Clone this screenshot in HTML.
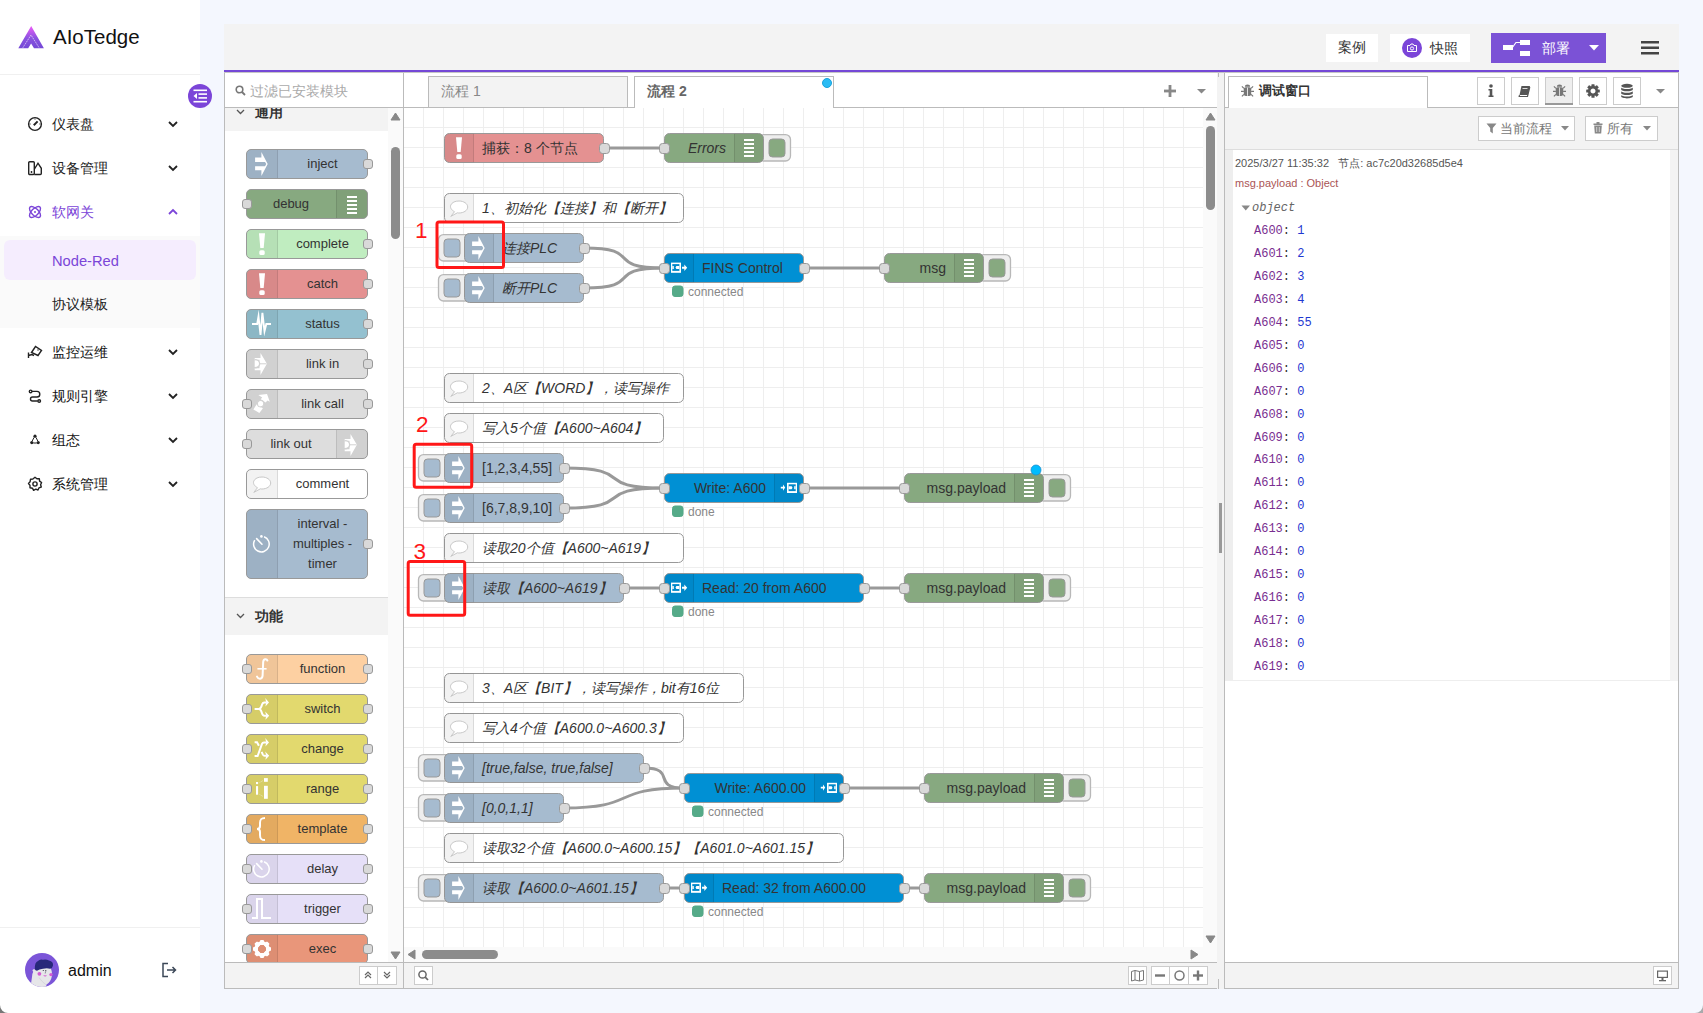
<!DOCTYPE html><html><head><meta charset="utf-8"><style>
*{box-sizing:border-box}
body{margin:0;width:1703px;height:1013px;position:relative;overflow:hidden;background:#f4f7fe;font-family:'Liberation Sans', sans-serif;color:#333}
.a{position:absolute}
.pn{position:absolute;left:246px;width:122px;height:30px;border:1px solid #999;border-radius:5px;font-size:13px;color:#333}
.pi{position:absolute;top:0;bottom:0;width:31px;background:rgba(0,0,0,0.05)}
.pil{left:0;border-right:1px solid rgba(0,0,0,0.1);border-radius:4px 0 0 4px}
.pir{right:0;border-left:1px solid rgba(0,0,0,0.1);border-radius:0 4px 4px 0}
.pl{position:absolute;top:0;line-height:28px;text-align:center;white-space:nowrap}
.pp{position:absolute;width:10px;height:10px;top:9px;background:#d9d9d9;border:1px solid #999;border-radius:3px}
.mi{position:absolute;left:0;width:200px;height:44px;font-size:14px;color:#111}
.mi span{position:absolute;left:52px;top:0;line-height:44px}
.dbg{position:absolute;left:1254px;font-family:'Liberation Mono',monospace;font-size:12px;line-height:16px;white-space:pre}
.dk{color:#792e90} .dv{color:#1f38d1}
</style></head><body>

<div class="a" style="left:0;top:0;width:200px;height:1013px;background:#fff"></div>
<svg class="a" style="left:18px;top:26px" width="27" height="23" viewBox="0 0 27 23">
<defs><linearGradient id="lg" x1="0" y1="0" x2="0" y2="1"><stop offset="0" stop-color="#ee5cf8"/><stop offset="0.55" stop-color="#8a52e0"/><stop offset="1" stop-color="#7448d6"/></linearGradient></defs>
<path d="M13.2 0 L25.9 22.2 H16 L13.1 17.6 L10.2 22.2 H0.3 Z" fill="url(#lg)"/>
<path d="M4.8 21.8 L13 9 L21.2 21.8" fill="none" stroke="#fff" stroke-opacity="0.65" stroke-width="0.9" stroke-dasharray="1.6 0.7"/>
</svg>
<div class="a" style="left:53px;top:23px;font-size:20.5px;line-height:28px;color:#111">AIoTedge</div>
<div class="a" style="left:0;top:74px;width:200px;height:1px;background:#f0f0f0"></div>
<div class="mi" style="top:102px"><span style="color:#222">仪表盘</span></div>
<svg class="a" style="left:27px;top:116px" width="16" height="16" viewBox="0 0 16 16" fill="none" stroke="#222" stroke-width="1.4"><circle cx="8" cy="8" r="6.4"/><path d="M6.8 9.2 L10.6 5.4" stroke-width="2"/><path d="M2.6 8 H3.6 M12.4 8 H13.4 M8 2.6 V3.6" stroke-width="1"/></svg>
<svg class="a" style="left:168px;top:120px" width="10" height="8" viewBox="0 0 10 8"><path d="M1 2 L5 6 L9 2" fill="none" stroke="#222" stroke-width="1.8"/></svg>
<div class="mi" style="top:146px"><span style="color:#222">设备管理</span></div>
<svg class="a" style="left:27px;top:160px" width="16" height="16" viewBox="0 0 16 16" fill="none" stroke="#222" stroke-width="1.4"><rect x="1.7" y="1.7" width="5.6" height="12.8" rx="1"/><path d="M7.3 14.5 H13.3 Q14.3 14.5 14.3 13.5 V8.3 L11 3.2 L7.5 9"/><path d="M4.5 11 V13 M3.5 12 H5.5" stroke-width="0.9"/></svg>
<svg class="a" style="left:168px;top:164px" width="10" height="8" viewBox="0 0 10 8"><path d="M1 2 L5 6 L9 2" fill="none" stroke="#222" stroke-width="1.8"/></svg>
<div class="mi" style="top:190px"><span style="color:#7b45d8">软网关</span></div>
<svg class="a" style="left:27px;top:204px" width="16" height="16" viewBox="0 0 16 16" fill="none" stroke="#7b45d8" stroke-width="1.4"><ellipse cx="8" cy="8" rx="7" ry="3.4" transform="rotate(45 8 8)"/><ellipse cx="8" cy="8" rx="7" ry="3.4" transform="rotate(-45 8 8)"/><circle cx="8" cy="8" r="1" fill="#7b45d8" stroke="none"/></svg>
<svg class="a" style="left:168px;top:208px" width="10" height="8" viewBox="0 0 10 8"><path d="M1 6 L5 2 L9 6" fill="none" stroke="#7b45d8" stroke-width="1.8"/></svg>
<div class="a" style="left:0;top:236px;width:200px;height:92px;background:#fafafa"></div>
<div class="a" style="left:4px;top:240px;width:192px;height:40px;background:#f5edfe;border-radius:6px"></div>
<div class="a" style="left:52px;top:241px;line-height:40px;font-size:14.7px;color:#7b45d8">Node-Red</div>
<div class="a" style="left:52px;top:284px;line-height:40px;font-size:14px;color:#222">协议模板</div>
<div class="mi" style="top:330px"><span>监控运维</span></div>
<svg class="a" style="left:27px;top:344px" width="16" height="16" viewBox="0 0 16 16" fill="none" stroke="#222" stroke-width="1.4"><path d="M4.5 8.5 L8.5 2.5 L14.5 6.5 L11 11.5 Z"/><path d="M1.5 8.5 V14 M1.5 11.5 L5 10.5 L7 11.5" /><circle cx="11" cy="6" r="0.7" fill="#222" stroke="none"/></svg>
<svg class="a" style="left:168px;top:348px" width="10" height="8" viewBox="0 0 10 8"><path d="M1 2 L5 6 L9 2" fill="none" stroke="#222" stroke-width="1.8"/></svg>
<div class="mi" style="top:374px"><span>规则引擎</span></div>
<svg class="a" style="left:27px;top:388px" width="16" height="16" viewBox="0 0 16 16" fill="none" stroke="#222" stroke-width="1.4"><circle cx="3.6" cy="3.4" r="1.3"/><circle cx="12.2" cy="13" r="1.3"/><path d="M5 3.4 H10 A2.8 2.8 0 0 1 10 9 H5.5 A2 2 0 0 0 5.5 13 H10.8"/></svg>
<svg class="a" style="left:168px;top:392px" width="10" height="8" viewBox="0 0 10 8"><path d="M1 2 L5 6 L9 2" fill="none" stroke="#222" stroke-width="1.8"/></svg>
<div class="mi" style="top:418px"><span>组态</span></div>
<svg class="a" style="left:27px;top:432px" width="16" height="16" viewBox="0 0 16 16" fill="none" stroke="#222" stroke-width="1.4"><circle cx="8" cy="4.2" r="1.6" fill="#222" stroke="none"/><circle cx="4.8" cy="10.6" r="1.6" fill="#222" stroke="none"/><circle cx="11.2" cy="10.6" r="1.6" fill="#222" stroke="none"/><path d="M7 5.5 L5.2 9 M9 5.5 L10.8 9 M6.3 11 H9.7" stroke-width="1"/></svg>
<svg class="a" style="left:168px;top:436px" width="10" height="8" viewBox="0 0 10 8"><path d="M1 2 L5 6 L9 2" fill="none" stroke="#222" stroke-width="1.8"/></svg>
<div class="mi" style="top:462px"><span>系统管理</span></div>
<svg class="a" style="left:27px;top:476px" width="16" height="16" viewBox="0 0 16 16" fill="none" stroke="#222" stroke-width="1.4"><circle cx="8" cy="8" r="2.1"/><path d="M8 1.3 L9.9 2.8 L12.3 2.7 L12.6 5.1 L14.6 6.5 L13.6 8.7 L14.3 11 L12 11.8 L11 14 L8.8 13.2 L6.6 14.3 L5.4 12.2 L3 11.8 L3 9.4 L1.5 7.5 L3.1 5.7 L3.5 3.3 L5.9 3 Z" stroke-linejoin="round"/></svg>
<svg class="a" style="left:168px;top:480px" width="10" height="8" viewBox="0 0 10 8"><path d="M1 2 L5 6 L9 2" fill="none" stroke="#222" stroke-width="1.8"/></svg>
<div class="a" style="left:0;top:927px;width:200px;height:1px;background:#f0f0f0"></div>
<svg class="a" style="left:25px;top:953px" width="34" height="34" viewBox="0 0 34 34">
<circle cx="17" cy="17" r="17" fill="#7b55d8"/>
<clipPath id="avc"><circle cx="17" cy="17" r="17"/></clipPath>
<g clip-path="url(#avc)">
<path d="M5.5 34 L7 24 Q7.5 16.5 12 15 H25.5 Q27.5 18 26.8 23.5 Q26 28.5 21.5 31.5 L21 34 Z" fill="#e6e6e9"/>
<path d="M14 24.5 Q17 29 20.8 31.5" fill="none" stroke="#d2d2d8" stroke-width="0.8"/>
<path d="M9.8 16 Q9.6 9 13 8 Q15 5.8 18 6.8 Q21 6 24 7.5 Q28.5 8.5 28 12.5 Q27.5 15.5 25 15.8 Q22 14.8 18 15.8 Q14 16.5 12 17.8 Q10 17.8 9.8 16 Z" fill="#28287a"/>
<circle cx="8.9" cy="17.6" r="1.3" fill="#e6e6e9"/>
<circle cx="14.4" cy="20.8" r="1.9" fill="#d55bd3"/><circle cx="26" cy="21.6" r="1.7" fill="#d55bd3"/>
<path d="M18.2 22.2 Q20 24.8 22 22.6 Z" fill="#d55bd3"/>
<circle cx="18.3" cy="17.5" r="0.6" fill="#334"/><circle cx="20.8" cy="17.7" r="0.6" fill="#334"/><path d="M20.6 18.5 L20.2 20.5" stroke="#556" stroke-width="0.6"/>
</g></svg>
<div class="a" style="left:68px;top:959px;font-size:16px;line-height:24px;color:#111">admin</div>
<svg class="a" style="left:161px;top:962px" width="16" height="16" viewBox="0 0 16 16" fill="none" stroke="#3c4858" stroke-width="1.5"><path d="M7 1.5 H2 V14.5 H7"/><path d="M6 8 H14.5 M11.5 5 L14.5 8 L11.5 11"/></svg>
<div class="a" style="left:224px;top:24px;width:1455px;height:46px;background:#f3f3f3"></div>
<div class="a" style="left:224px;top:70px;width:1455px;height:2px;background:#7448d6"></div>
<div class="a" style="left:1326px;top:34px;width:52px;height:28px;background:#fff;font-size:14px;line-height:26px;text-align:center;color:#333">案例</div>
<div class="a" style="left:1390px;top:34px;width:80px;height:28px;background:#fff"></div>
<svg class="a" style="left:1402px;top:38px" width="20" height="20" viewBox="0 0 20 20"><circle cx="10" cy="10" r="10" fill="#7b45d8"/>
<path d="M5.5 7.5 H8 L9 6 H11 L12 7.5 H14.5 V13.5 H5.5 Z" fill="none" stroke="#fff" stroke-width="1"/><circle cx="10" cy="10.5" r="1.6" fill="none" stroke="#fff" stroke-width="1"/></svg>
<div class="a" style="left:1430px;top:34px;font-size:14px;line-height:28px;color:#333">快照</div>
<div class="a" style="left:1491px;top:33px;width:115px;height:30px;background:#7b52d6"></div>
<svg class="a" style="left:1500px;top:38px" width="30" height="20" viewBox="0 0 30 20">
<rect x="3" y="7" width="10" height="5" fill="#fff"/><rect x="20" y="2" width="10" height="5" fill="#fff"/><rect x="20" y="13" width="10" height="5" fill="#fff"/>
<path d="M12 10 L16 4.5 H21" fill="none" stroke="#fff" stroke-width="1.2"/></svg>
<div class="a" style="left:1542px;top:33px;font-size:14px;line-height:30px;color:#fff">部署</div>
<svg class="a" style="left:1589px;top:45px" width="10" height="6" viewBox="0 0 10 6"><path d="M0 0 H10 L5 5.5 Z" fill="#fff"/></svg>
<svg class="a" style="left:1641px;top:40px" width="18" height="16" viewBox="0 0 18 16"><rect x="0" y="1" width="18" height="2.5" fill="#444"/><rect x="0" y="6.5" width="18" height="2.5" fill="#444"/><rect x="0" y="12" width="18" height="2.5" fill="#444"/></svg>
<div class="a" style="left:224px;top:72px;width:180px;height:917px;background:#fff;border:1px solid #bbb;border-top:none"></div>
<div class="a" style="left:225px;top:107px;width:178px;height:1px;background:#bbb"></div>
<svg class="a" style="left:235px;top:85px" width="11" height="11" viewBox="0 0 11 11"><circle cx="4.5" cy="4.5" r="3.3" fill="none" stroke="#777" stroke-width="1.6"/><path d="M7 7 L10 10" stroke="#777" stroke-width="1.8"/></svg>
<div class="a" style="left:250px;top:81px;font-size:14px;line-height:20px;color:#aaa">过滤已安装模块</div>
<div class="a" style="left:225px;top:108px;width:163px;height:854px;overflow:hidden">
<div class="a" style="left:0;top:-15px;width:163px;height:38px;background:#f3f3f3;border-top:1px solid #ddd"></div>
<svg class="a" style="left:11px;top:1px" width="9" height="6" viewBox="0 0 9 6"><path d="M1 1 L4.5 4.5 L8 1" fill="none" stroke="#555" stroke-width="1.3"/></svg>
<div class="a" style="left:30px;top:-6px;font-size:14px;line-height:20px;font-weight:bold;color:#333">通用</div>
<div class="a" style="left:0;top:489px;width:163px;height:38px;background:#f3f3f3;border-top:1px solid #ddd"></div>
<svg class="a" style="left:11px;top:505px" width="9" height="6" viewBox="0 0 9 6"><path d="M1 1 L4.5 4.5 L8 1" fill="none" stroke="#555" stroke-width="1.3"/></svg>
<div class="a" style="left:30px;top:498px;font-size:14px;line-height:20px;font-weight:bold;color:#333">功能</div>
<div class="pn" style="left:21px;top:41px;height:30px;background:#a6bbcf">
<div class="pi pil"></div>
<svg class="a" style="left:0;top:-1px" width="30" height="30" viewBox="0 0 30 30"><path d="M8.1 8.6 H14.4 V3 L20.7 15 L14.4 27 V21.2 H8.1 V17.2 H18 L19.3 15 L18 12.9 H8.1 Z" fill="#fff"/></svg>
<div class="pl" style="left:31px;right:0;top:0px;line-height:28px">inject</div>
</div>
<div class="pp" style="left:138px;top:51px"></div>
<div class="pn" style="left:21px;top:81px;height:30px;background:#87a980">
<div class="pi pir"></div>
<svg class="a" style="right:0;top:0" width="30" height="30" viewBox="0 0 30 30"><rect x="10" y="6" width="10" height="2" fill="#fff"/><rect x="10" y="10" width="10" height="2" fill="#fff"/><rect x="10" y="14" width="10" height="2" fill="#fff"/><rect x="10" y="18" width="10" height="2" fill="#fff"/><rect x="10" y="22" width="10" height="2" fill="#fff"/></svg>
<div class="pl" style="left:0;right:32px">debug</div>
</div>
<div class="pp" style="left:17px;top:91px"></div>
<div class="pn" style="left:21px;top:121px;height:30px;background:#c0edc0">
<div class="pi pil"></div>
<svg class="a" style="left:0;top:-1px" width="30" height="30" viewBox="0 0 30 30"><path d="M12 4.3 H18 L16.7 19 H13.3 Z" fill="#fff"/><rect x="12.3" y="21.2" width="5.4" height="4.8" rx="1.6" fill="#fff"/></svg>
<div class="pl" style="left:31px;right:0;top:0px;line-height:28px">complete</div>
</div>
<div class="pp" style="left:138px;top:131px"></div>
<div class="pn" style="left:21px;top:161px;height:30px;background:#e49191">
<div class="pi pil"></div>
<svg class="a" style="left:0;top:-1px" width="30" height="30" viewBox="0 0 30 30"><path d="M12 4.3 H18 L16.7 19 H13.3 Z" fill="#fff"/><rect x="12.3" y="21.2" width="5.4" height="4.8" rx="1.6" fill="#fff"/></svg>
<div class="pl" style="left:31px;right:0;top:0px;line-height:28px">catch</div>
</div>
<div class="pp" style="left:138px;top:171px"></div>
<div class="pn" style="left:21px;top:201px;height:30px;background:#94c1d0">
<div class="pi pil"></div>
<svg class="a" style="left:0;top:-1px" width="30" height="30" viewBox="0 0 30 30"><path d="M5 15 H10.2 L11.5 7.5 L13.5 25.8 L15.4 3.8 L17.5 22.2 L19.3 15 H24" fill="none" stroke="#fff" stroke-width="1.9" stroke-linejoin="miter" stroke-miterlimit="10"/></svg>
<div class="pl" style="left:31px;right:0;top:0px;line-height:28px">status</div>
</div>
<div class="pp" style="left:138px;top:211px"></div>
<div class="pn" style="left:21px;top:241px;height:30px;background:#dddddd">
<div class="pi pil"></div>
<svg class="a" style="left:0;top:-1px" width="30" height="30" viewBox="0 0 30 30"><path d="M7.7 8.9 H13.5 V4.1 L19.9 14.8 L13.5 26 V21.3 H7.7 V19.2 H12.5 V10.7 H7.7 Z" fill="#fff"/><path d="M7.7 10 A5.6 4.8 0 0 1 7.7 19.6 Z" fill="#d2d2d2"/><path d="M7.7 11.2 A4.3 3.4 0 0 1 7.7 18 Z" fill="#fff"/><path d="M12 14.8 H19.5" stroke="#d2d2d2" stroke-width="1"/></svg>
<div class="pl" style="left:31px;right:0;top:0px;line-height:28px">link in</div>
</div>
<div class="pp" style="left:138px;top:251px"></div>
<div class="pn" style="left:21px;top:281px;height:30px;background:#dddddd">
<div class="pi pil"></div>
<svg class="a" style="left:0;top:-1px" width="30" height="30" viewBox="0 0 30 30"><path d="M11.3 6 L20 5 L22.8 12.7 L20.5 11.5 L18.6 13.6 L13.7 10.2 L15.2 8.4 Z" fill="#fff"/><circle cx="13.6" cy="14.6" r="3.5" fill="#d2d2d2"/><circle cx="13.6" cy="14.6" r="2.6" fill="#fff"/><path d="M6.4 20.4 L9.7 15.2 L15.9 19.2 L12.4 24 Z" fill="#fff"/><circle cx="13.6" cy="14.6" r="3.5" fill="none" stroke="#d2d2d2" stroke-width="0.9"/></svg>
<div class="pl" style="left:31px;right:0;top:0px;line-height:28px">link call</div>
</div>
<div class="pp" style="left:17px;top:291px"></div>
<div class="pp" style="left:138px;top:291px"></div>
<div class="pn" style="left:21px;top:321px;height:30px;background:#dddddd">
<div class="pi pir"></div>
<svg class="a" style="right:0;top:0" width="30" height="30" viewBox="0 0 30 30"><path d="M7.7 8.9 H13.5 V4.1 L19.9 14.8 L13.5 26 V21.3 H7.7 V19.2 H12.5 V10.7 H7.7 Z" fill="#fff"/><path d="M7.7 10 A5.6 4.8 0 0 1 7.7 19.6 Z" fill="#d2d2d2"/><path d="M7.7 11.2 A4.3 3.4 0 0 1 7.7 18 Z" fill="#fff"/><path d="M12 14.8 H19.5" stroke="#d2d2d2" stroke-width="1"/></svg>
<div class="pl" style="left:0;right:32px">link out</div>
</div>
<div class="pp" style="left:17px;top:331px"></div>
<div class="pn" style="left:21px;top:361px;height:30px;background:#ffffff">
<div class="pi pil"></div>
<svg class="a" style="left:0;top:-1px" width="30" height="30" viewBox="0 0 30 30"><path d="M10.5 18.7 C7.2 17, 5.8 14.2, 6.8 12 C8 9.3, 11.3 8, 15 8 C19.8 8, 23.7 10.7, 23.7 14 C23.7 17.3, 19.8 20, 15 20 C14.4 20, 13.9 20, 13.4 19.8 L6.8 23.4 Z" fill="#fff" stroke="#c8c8c8" stroke-width="1"/></svg>
<div class="pl" style="left:31px;right:0;top:0px;line-height:28px">comment</div>
</div>
<div class="pn" style="left:21px;top:401px;height:70px;background:#a6bbcf">
<div class="pi pil"></div>
<svg class="a" style="left:0;top:19px" width="30" height="30" viewBox="0 0 30 30"><path d="M17.07 7.77 A7.8 7.8 0 1 1 7.71 11.08" fill="none" stroke="#fff" stroke-width="1.5"/><circle cx="14.4" cy="7.4" r="1.3" fill="#fff"/><path d="M9.6 9.6 L15 15.2" stroke="#fff" stroke-width="1.6" stroke-linecap="round"/></svg>
<div class="pl" style="left:31px;right:0;top:4px;line-height:20px">interval -<br>multiples -<br>timer</div>
</div>
<div class="pp" style="left:138px;top:431px"></div>
<div class="pn" style="left:21px;top:546px;height:30px;background:#fdd0a2">
<div class="pi pil"></div>
<svg class="a" style="left:0;top:-1px" width="30" height="30" viewBox="0 0 30 30"><path d="M20.4 6.6 C19.8 4.6, 16.6 4.4, 16.2 7.8 L15.6 21.6 C15.3 25.4, 11.5 25.6, 10 22.6" fill="none" stroke="#fff" stroke-width="2" stroke-linecap="round"/><path d="M10.4 14.8 H19.6" stroke="#fff" stroke-width="1.6"/></svg>
<div class="pl" style="left:31px;right:0;top:0px;line-height:28px">function</div>
</div>
<div class="pp" style="left:17px;top:556px"></div>
<div class="pp" style="left:138px;top:556px"></div>
<div class="pn" style="left:21px;top:586px;height:30px;background:#e2d96e">
<div class="pi pil"></div>
<svg class="a" style="left:0;top:-1px" width="30" height="30" viewBox="0 0 30 30"><path d="M7.6 15 H11.8 C13.5 15 14.4 13 14.9 11 C15.4 9 16 8.4 17.5 8.4 H19.5 M11.8 15 C13.5 15 14.4 17 14.9 19 C15.4 21 16 21.7 17.5 21.7 H19.5" fill="none" stroke="#fff" stroke-width="2"/><path d="M18.2 4 L22 8.4 L18.4 12.6 L19.2 8.4 Z M18.2 17.6 L22.2 21.7 L18.4 25.8 L19.2 21.7 Z" fill="#fff"/></svg>
<div class="pl" style="left:31px;right:0;top:0px;line-height:28px">switch</div>
</div>
<div class="pp" style="left:17px;top:596px"></div>
<div class="pp" style="left:138px;top:596px"></div>
<div class="pn" style="left:21px;top:626px;height:30px;background:#e2d96e">
<div class="pi pil"></div>
<svg class="a" style="left:0;top:-1px" width="30" height="30" viewBox="0 0 30 30"><path d="M7.6 8.2 H10 L11.9 11.8 M7.6 22 H10.6 L15 9.8 C15.4 8.7 16 8.4 17 8.4 H19.5 M14.6 17.8 L15.9 20.6 C16.3 21.4 16.8 21.7 17.6 21.7 H19.5" fill="none" stroke="#fff" stroke-width="2"/><path d="M18.2 4 L22 8.4 L18.4 12.6 L19.2 8.4 Z M18.2 17.6 L22.2 21.7 L18.4 25.8 L19.2 21.7 Z" fill="#fff"/></svg>
<div class="pl" style="left:31px;right:0;top:0px;line-height:28px">change</div>
</div>
<div class="pp" style="left:17px;top:636px"></div>
<div class="pp" style="left:138px;top:636px"></div>
<div class="pn" style="left:21px;top:666px;height:30px;background:#e2d96e">
<div class="pi pil"></div>
<svg class="a" style="left:0;top:-1px" width="30" height="30" viewBox="0 0 30 30"><rect x="9" y="8" width="2.1" height="2.1" fill="#fff"/><rect x="9" y="12.1" width="2.1" height="8.6" fill="#fff"/><rect x="17" y="4.1" width="3.8" height="3.7" fill="#fff"/><rect x="17" y="11.8" width="3.8" height="13" fill="#fff"/><path d="M12.5 8.6 L16 6.6 M12.5 20.4 L16 22.4" stroke="#fff" stroke-opacity="0.6" stroke-width="0.7" stroke-dasharray="1 0.6"/></svg>
<div class="pl" style="left:31px;right:0;top:0px;line-height:28px">range</div>
</div>
<div class="pp" style="left:17px;top:676px"></div>
<div class="pp" style="left:138px;top:676px"></div>
<div class="pn" style="left:21px;top:706px;height:30px;background:#f0b466">
<div class="pi pil"></div>
<svg class="a" style="left:0;top:-1px" width="30" height="30" viewBox="0 0 30 30"><path d="M18 4 C14 4, 13 5.5, 13 9 V12 C13 14, 11.5 15, 10 15 C11.5 15, 13 16, 13 18 V21 C13 24.5, 14 26, 18 26" fill="none" stroke="#fff" stroke-width="2"/></svg>
<div class="pl" style="left:31px;right:0;top:0px;line-height:28px">template</div>
</div>
<div class="pp" style="left:17px;top:716px"></div>
<div class="pp" style="left:138px;top:716px"></div>
<div class="pn" style="left:21px;top:746px;height:30px;background:#e6e0f8">
<div class="pi pil"></div>
<svg class="a" style="left:0;top:-1px" width="30" height="30" viewBox="0 0 30 30"><path d="M17.07 7.77 A7.8 7.8 0 1 1 7.71 11.08" fill="none" stroke="#fff" stroke-width="1.5"/><circle cx="14.4" cy="7.4" r="1.3" fill="#fff"/><path d="M9.6 9.6 L15 15.2" stroke="#fff" stroke-width="1.6" stroke-linecap="round"/></svg>
<div class="pl" style="left:31px;right:0;top:0px;line-height:28px">delay</div>
</div>
<div class="pp" style="left:17px;top:756px"></div>
<div class="pp" style="left:138px;top:756px"></div>
<div class="pn" style="left:21px;top:786px;height:30px;background:#e6e0f8">
<div class="pi pil"></div>
<svg class="a" style="left:0;top:-1px" width="30" height="30" viewBox="0 0 30 30"><path d="M5 24 H10 V5 H15 V24 H24" fill="none" stroke="#fff" stroke-width="2"/></svg>
<div class="pl" style="left:31px;right:0;top:0px;line-height:28px">trigger</div>
</div>
<div class="pp" style="left:17px;top:796px"></div>
<div class="pp" style="left:138px;top:796px"></div>
<div class="pn" style="left:21px;top:826px;height:30px;background:#e9967a">
<div class="pi pil"></div>
<svg class="a" style="left:0;top:-1px" width="30" height="30" viewBox="0 0 30 30"><g transform="translate(15 15)"><rect x="-2" y="-9" width="4" height="5" rx="1" fill="#fff" transform="rotate(0)"/><rect x="-2" y="-9" width="4" height="5" rx="1" fill="#fff" transform="rotate(45)"/><rect x="-2" y="-9" width="4" height="5" rx="1" fill="#fff" transform="rotate(90)"/><rect x="-2" y="-9" width="4" height="5" rx="1" fill="#fff" transform="rotate(135)"/><rect x="-2" y="-9" width="4" height="5" rx="1" fill="#fff" transform="rotate(180)"/><rect x="-2" y="-9" width="4" height="5" rx="1" fill="#fff" transform="rotate(225)"/><rect x="-2" y="-9" width="4" height="5" rx="1" fill="#fff" transform="rotate(270)"/><rect x="-2" y="-9" width="4" height="5" rx="1" fill="#fff" transform="rotate(315)"/><circle r="6" fill="none" stroke="#fff" stroke-width="3.5"/></g></svg>
<div class="pl" style="left:31px;right:0;top:0px;line-height:28px">exec</div>
</div>
<div class="pp" style="left:17px;top:836px"></div>
<div class="pp" style="left:138px;top:836px"></div>
</div>
<div class="a" style="left:388px;top:108px;width:15px;height:854px;background:#fafafa"></div>
<svg class="a" style="left:390px;top:112px" width="11" height="9" viewBox="0 0 11 9"><path d="M1 8 L5.5 1 L10 8 Z" fill="#888" stroke="#888" stroke-width="1" stroke-linejoin="round"/></svg>
<div class="a" style="left:391px;top:147px;width:9px;height:92px;background:#8c8c8c;border-radius:4.5px"></div>
<svg class="a" style="left:390px;top:951px" width="11" height="9" viewBox="0 0 11 9"><path d="M1 1 L5.5 8 L10 1 Z" fill="#888" stroke="#888" stroke-width="1" stroke-linejoin="round"/></svg>
<div class="a" style="left:225px;top:962px;width:178px;height:26px;background:#f3f3f3;border-top:1px solid #bbb"></div>
<div class="a" style="left:359px;top:966px;width:19px;height:19px;background:#fff;border:1px solid #ccc"></div>
<div class="a" style="left:377px;top:966px;width:20px;height:19px;background:#fff;border:1px solid #ccc"></div>
<svg class="a" style="left:363px;top:970px" width="10" height="10" viewBox="0 0 10 10"><path d="M2 5 L5 2 L8 5 M2 8 L5 5 L8 8" fill="none" stroke="#666" stroke-width="1.2"/></svg>
<svg class="a" style="left:382px;top:970px" width="10" height="10" viewBox="0 0 10 10"><path d="M2 2 L5 5 L8 2 M2 5 L5 8 L8 5" fill="none" stroke="#666" stroke-width="1.2"/></svg>
<div class="a" style="left:404px;top:72px;width:815px;height:36px;background:#fff;border-bottom:1px solid #bbb"></div>
<div class="a" style="left:428px;top:76px;width:200px;height:31px;background:#f3f3f3;border:1px solid #bbb;border-bottom:none"></div>
<div class="a" style="left:441px;top:80px;font-size:14px;line-height:22px;color:#888">流程 1</div>
<div class="a" style="left:634px;top:76px;width:200px;height:32px;background:#fff;border:1px solid #bbb;border-bottom:none"></div>
<div class="a" style="left:647px;top:80px;font-size:14px;line-height:22px;color:#666;font-weight:bold">流程 2</div>
<div class="a" style="left:822px;top:78px;width:10px;height:10px;border-radius:5px;background:#2bbcf4;border:1px solid #1aa3dc"></div>
<svg class="a" style="left:1164px;top:85px" width="12" height="12" viewBox="0 0 12 12"><rect x="4.6" y="0" width="2.8" height="12" fill="#888"/><rect x="0" y="4.6" width="12" height="2.8" fill="#888"/></svg>
<svg class="a" style="left:1197px;top:89px" width="10" height="5" viewBox="0 0 10 5"><path d="M0 0 H9 L4.5 4.5 Z" fill="#888"/></svg>
<svg class="a" style="left:404px;top:108px;font-family:'Liberation Sans', sans-serif" width="799" height="839" viewBox="404 108 799 839"><rect x="404" y="108" width="799" height="839" fill="#fff"/><path d="M423.5 108 V947 M443.5 108 V947 M463.5 108 V947 M483.5 108 V947 M503.5 108 V947 M523.5 108 V947 M543.5 108 V947 M563.5 108 V947 M583.5 108 V947 M603.5 108 V947 M623.5 108 V947 M643.5 108 V947 M663.5 108 V947 M683.5 108 V947 M703.5 108 V947 M723.5 108 V947 M743.5 108 V947 M763.5 108 V947 M783.5 108 V947 M803.5 108 V947 M823.5 108 V947 M843.5 108 V947 M863.5 108 V947 M883.5 108 V947 M903.5 108 V947 M923.5 108 V947 M943.5 108 V947 M963.5 108 V947 M983.5 108 V947 M1003.5 108 V947 M1023.5 108 V947 M1043.5 108 V947 M1063.5 108 V947 M1083.5 108 V947 M1103.5 108 V947 M1123.5 108 V947 M1143.5 108 V947 M1163.5 108 V947 M1183.5 108 V947 M404 127.5 H1203 M404 147.5 H1203 M404 167.5 H1203 M404 187.5 H1203 M404 207.5 H1203 M404 227.5 H1203 M404 247.5 H1203 M404 267.5 H1203 M404 287.5 H1203 M404 307.5 H1203 M404 327.5 H1203 M404 347.5 H1203 M404 367.5 H1203 M404 387.5 H1203 M404 407.5 H1203 M404 427.5 H1203 M404 447.5 H1203 M404 467.5 H1203 M404 487.5 H1203 M404 507.5 H1203 M404 527.5 H1203 M404 547.5 H1203 M404 567.5 H1203 M404 587.5 H1203 M404 607.5 H1203 M404 627.5 H1203 M404 647.5 H1203 M404 667.5 H1203 M404 687.5 H1203 M404 707.5 H1203 M404 727.5 H1203 M404 747.5 H1203 M404 767.5 H1203 M404 787.5 H1203 M404 807.5 H1203 M404 827.5 H1203 M404 847.5 H1203 M404 867.5 H1203 M404 887.5 H1203 M404 907.5 H1203 M404 927.5 H1203" stroke="#eee" stroke-width="1" fill="none"/><path d="M604 148 C649.00 148 619.00 148 664 148" stroke="#999" stroke-width="3" fill="none"/><path d="M584 248 C645.85 248 602.15 268 664 268" stroke="#999" stroke-width="3" fill="none"/><path d="M584 288 C645.85 288 602.15 268 664 268" stroke="#999" stroke-width="3" fill="none"/><path d="M804 268 C864.00 268 824.00 268 884 268" stroke="#999" stroke-width="3" fill="none"/><path d="M564 468 C639.00 468 589.00 488 664 488" stroke="#999" stroke-width="3" fill="none"/><path d="M564 508 C639.00 508 589.00 488 664 488" stroke="#999" stroke-width="3" fill="none"/><path d="M804 488 C879.00 488 829.00 488 904 488" stroke="#999" stroke-width="3" fill="none"/><path d="M624 588 C654.00 588 634.00 588 664 588" stroke="#999" stroke-width="3" fill="none"/><path d="M864 588 C894.00 588 874.00 588 904 588" stroke="#999" stroke-width="3" fill="none"/><path d="M644 768 C677.54 768 650.46 788 684 788" stroke="#999" stroke-width="3" fill="none"/><path d="M564 808 C639.00 808 609.00 788 684 788" stroke="#999" stroke-width="3" fill="none"/><path d="M844 788 C904.00 788 864.00 788 924 788" stroke="#999" stroke-width="3" fill="none"/><path d="M664 888 C679.00 888 669.00 888 684 888" stroke="#999" stroke-width="3" fill="none"/><path d="M904 888 C919.00 888 909.00 888 924 888" stroke="#999" stroke-width="3" fill="none"/><rect x="444.5" y="133.5" width="159" height="29" rx="5" fill="#e49191" stroke="#999"/><path d="M449.5 133.5 H474 V162.5 H449.5 A5 5 0 0 1 444.5 157.5 V138.5 A5 5 0 0 1 449.5 133.5 Z" fill="#000" fill-opacity="0.05"/><path d="M473.5 134 V162" stroke="#000" stroke-opacity="0.1"/><g transform="translate(444 133)"><path d="M12 4.3 H18 L16.7 19 H13.3 Z" fill="#fff"/><rect x="12.3" y="21.2" width="5.4" height="4.8" rx="1.6" fill="#fff"/></g><text x="482" y="152.9" font-size="14" fill="#333">捕获：8 个节点</text><rect x="599.5" y="143.5" width="10" height="10" rx="3" fill="#d9d9d9" stroke="#999"/><rect x="758.5" y="134.6" width="32" height="26.4" rx="5" fill="#eee" stroke="#b8b8b8" stroke-width="1.3"/><rect x="769" y="139" width="16" height="18" rx="3.5" fill="#87a980" stroke="#999"/><rect x="664.5" y="133.5" width="99" height="29" rx="5" fill="#87a980" stroke="#999"/><path d="M734 133.5 H758.5 A5 5 0 0 1 763.5 138.5 V157.5 A5 5 0 0 1 758.5 162.5 H734 Z" fill="#000" fill-opacity="0.05"/><path d="M734.5 134 V162" stroke="#000" stroke-opacity="0.1"/><g transform="translate(734 133)"><rect x="10" y="6" width="10" height="2" fill="#fff"/><rect x="10" y="10" width="10" height="2" fill="#fff"/><rect x="10" y="14" width="10" height="2" fill="#fff"/><rect x="10" y="18" width="10" height="2" fill="#fff"/><rect x="10" y="22" width="10" height="2" fill="#fff"/></g><text x="726" y="152.9" font-style="italic" text-anchor="end" font-size="14" fill="#333">Errors</text><rect x="659.5" y="143.5" width="10" height="10" rx="3" fill="#d9d9d9" stroke="#999"/><rect x="444.5" y="193.5" width="239" height="29" rx="5" fill="#fff" stroke="#999"/><path d="M449.5 193.5 H474 V222.5 H449.5 A5 5 0 0 1 444.5 217.5 V198.5 A5 5 0 0 1 449.5 193.5 Z" fill="#000" fill-opacity="0.05"/><path d="M473.5 194 V222" stroke="#000" stroke-opacity="0.1"/><g transform="translate(444 193)"><path d="M10.5 18.7 C7.2 17, 5.8 14.2, 6.8 12 C8 9.3, 11.3 8, 15 8 C19.8 8, 23.7 10.7, 23.7 14 C23.7 17.3, 19.8 20, 15 20 C14.4 20, 13.9 20, 13.4 19.8 L6.8 23.4 Z" fill="#fff" stroke="#c8c8c8" stroke-width="1"/></g><text x="482" y="212.9" font-style="italic" font-size="14" fill="#333">1、初始化【连接】和【断开】</text><rect x="438.5" y="234.6" width="32" height="26.4" rx="5" fill="#eee" stroke="#b8b8b8" stroke-width="1.3"/><rect x="444" y="239" width="16" height="18" rx="3.5" fill="#a6bbcf" stroke="#999"/><rect x="464.5" y="233.5" width="119" height="29" rx="5" fill="#a6bbcf" stroke="#999"/><path d="M469.5 233.5 H494 V262.5 H469.5 A5 5 0 0 1 464.5 257.5 V238.5 A5 5 0 0 1 469.5 233.5 Z" fill="#000" fill-opacity="0.05"/><path d="M493.5 234 V262" stroke="#000" stroke-opacity="0.1"/><g transform="translate(464 233)"><path d="M8.1 8.6 H14.4 V3 L20.7 15 L14.4 27 V21.2 H8.1 V17.2 H18 L19.3 15 L18 12.9 H8.1 Z" fill="#fff"/></g><text x="502" y="252.9" font-style="italic" font-size="14" fill="#333">连接PLC</text><rect x="579.5" y="243.5" width="10" height="10" rx="3" fill="#d9d9d9" stroke="#999"/><rect x="438.5" y="274.6" width="32" height="26.4" rx="5" fill="#eee" stroke="#b8b8b8" stroke-width="1.3"/><rect x="444" y="279" width="16" height="18" rx="3.5" fill="#a6bbcf" stroke="#999"/><rect x="464.5" y="273.5" width="119" height="29" rx="5" fill="#a6bbcf" stroke="#999"/><path d="M469.5 273.5 H494 V302.5 H469.5 A5 5 0 0 1 464.5 297.5 V278.5 A5 5 0 0 1 469.5 273.5 Z" fill="#000" fill-opacity="0.05"/><path d="M493.5 274 V302" stroke="#000" stroke-opacity="0.1"/><g transform="translate(464 273)"><path d="M8.1 8.6 H14.4 V3 L20.7 15 L14.4 27 V21.2 H8.1 V17.2 H18 L19.3 15 L18 12.9 H8.1 Z" fill="#fff"/></g><text x="502" y="292.9" font-style="italic" font-size="14" fill="#333">断开PLC</text><rect x="579.5" y="283.5" width="10" height="10" rx="3" fill="#d9d9d9" stroke="#999"/><rect x="664.5" y="253.5" width="139" height="29" rx="5" fill="#0090d4" stroke="#999"/><path d="M669.5 253.5 H694 V282.5 H669.5 A5 5 0 0 1 664.5 277.5 V258.5 A5 5 0 0 1 669.5 253.5 Z" fill="#000" fill-opacity="0.05"/><path d="M693.5 254 V282" stroke="#000" stroke-opacity="0.1"/><g transform="translate(664 253)"><rect x="7" y="9.6" width="10" height="10.2" fill="#fff"/><rect x="8.3" y="11.1" width="7.1" height="6.8" fill="#0089ca"/><rect x="8.3" y="13" width="1.5" height="3" fill="#fff"/><path d="M15.4 13 H12.4 L11.5 14.5 L12.4 16 H15.4 Z" fill="#fff"/><path d="M18 13.8 H20.3 V11.6 L23.2 14.8 L20.3 17.9 V15.8 H18 Z" fill="#fff"/></g><text x="702" y="272.9" font-size="14" fill="#333">FINS Control</text><rect x="659.5" y="263.5" width="10" height="10" rx="3" fill="#d9d9d9" stroke="#999"/><rect x="799.5" y="263.5" width="10" height="10" rx="3" fill="#d9d9d9" stroke="#999"/><rect x="672.5" y="286" width="10.5" height="10.5" rx="2.5" fill="#5a8" stroke="#5a8" stroke-width="1"/><text x="688" y="295.5" font-size="12" fill="#888">connected</text><rect x="978.5" y="254.6" width="32" height="26.4" rx="5" fill="#eee" stroke="#b8b8b8" stroke-width="1.3"/><rect x="989" y="259" width="16" height="18" rx="3.5" fill="#87a980" stroke="#999"/><rect x="884.5" y="253.5" width="99" height="29" rx="5" fill="#87a980" stroke="#999"/><path d="M954 253.5 H978.5 A5 5 0 0 1 983.5 258.5 V277.5 A5 5 0 0 1 978.5 282.5 H954 Z" fill="#000" fill-opacity="0.05"/><path d="M954.5 254 V282" stroke="#000" stroke-opacity="0.1"/><g transform="translate(954 253)"><rect x="10" y="6" width="10" height="2" fill="#fff"/><rect x="10" y="10" width="10" height="2" fill="#fff"/><rect x="10" y="14" width="10" height="2" fill="#fff"/><rect x="10" y="18" width="10" height="2" fill="#fff"/><rect x="10" y="22" width="10" height="2" fill="#fff"/></g><text x="946" y="272.9" text-anchor="end" font-size="14" fill="#333">msg</text><rect x="879.5" y="263.5" width="10" height="10" rx="3" fill="#d9d9d9" stroke="#999"/><rect x="444.5" y="373.5" width="239" height="29" rx="5" fill="#fff" stroke="#999"/><path d="M449.5 373.5 H474 V402.5 H449.5 A5 5 0 0 1 444.5 397.5 V378.5 A5 5 0 0 1 449.5 373.5 Z" fill="#000" fill-opacity="0.05"/><path d="M473.5 374 V402" stroke="#000" stroke-opacity="0.1"/><g transform="translate(444 373)"><path d="M10.5 18.7 C7.2 17, 5.8 14.2, 6.8 12 C8 9.3, 11.3 8, 15 8 C19.8 8, 23.7 10.7, 23.7 14 C23.7 17.3, 19.8 20, 15 20 C14.4 20, 13.9 20, 13.4 19.8 L6.8 23.4 Z" fill="#fff" stroke="#c8c8c8" stroke-width="1"/></g><text x="482" y="392.9" font-style="italic" font-size="14" fill="#333">2、A区【WORD】，读写操作</text><rect x="444.5" y="413.5" width="219" height="29" rx="5" fill="#fff" stroke="#999"/><path d="M449.5 413.5 H474 V442.5 H449.5 A5 5 0 0 1 444.5 437.5 V418.5 A5 5 0 0 1 449.5 413.5 Z" fill="#000" fill-opacity="0.05"/><path d="M473.5 414 V442" stroke="#000" stroke-opacity="0.1"/><g transform="translate(444 413)"><path d="M10.5 18.7 C7.2 17, 5.8 14.2, 6.8 12 C8 9.3, 11.3 8, 15 8 C19.8 8, 23.7 10.7, 23.7 14 C23.7 17.3, 19.8 20, 15 20 C14.4 20, 13.9 20, 13.4 19.8 L6.8 23.4 Z" fill="#fff" stroke="#c8c8c8" stroke-width="1"/></g><text x="482" y="432.9" font-style="italic" font-size="14" fill="#333">写入5个值【A600~A604】</text><rect x="418.5" y="454.6" width="32" height="26.4" rx="5" fill="#eee" stroke="#b8b8b8" stroke-width="1.3"/><rect x="424" y="459" width="16" height="18" rx="3.5" fill="#a6bbcf" stroke="#999"/><rect x="444.5" y="453.5" width="119" height="29" rx="5" fill="#a6bbcf" stroke="#999"/><path d="M449.5 453.5 H474 V482.5 H449.5 A5 5 0 0 1 444.5 477.5 V458.5 A5 5 0 0 1 449.5 453.5 Z" fill="#000" fill-opacity="0.05"/><path d="M473.5 454 V482" stroke="#000" stroke-opacity="0.1"/><g transform="translate(444 453)"><path d="M8.1 8.6 H14.4 V3 L20.7 15 L14.4 27 V21.2 H8.1 V17.2 H18 L19.3 15 L18 12.9 H8.1 Z" fill="#fff"/></g><text x="482" y="472.9" font-size="14" fill="#333">[1,2,3,4,55]</text><rect x="559.5" y="463.5" width="10" height="10" rx="3" fill="#d9d9d9" stroke="#999"/><rect x="418.5" y="494.6" width="32" height="26.4" rx="5" fill="#eee" stroke="#b8b8b8" stroke-width="1.3"/><rect x="424" y="499" width="16" height="18" rx="3.5" fill="#a6bbcf" stroke="#999"/><rect x="444.5" y="493.5" width="119" height="29" rx="5" fill="#a6bbcf" stroke="#999"/><path d="M449.5 493.5 H474 V522.5 H449.5 A5 5 0 0 1 444.5 517.5 V498.5 A5 5 0 0 1 449.5 493.5 Z" fill="#000" fill-opacity="0.05"/><path d="M473.5 494 V522" stroke="#000" stroke-opacity="0.1"/><g transform="translate(444 493)"><path d="M8.1 8.6 H14.4 V3 L20.7 15 L14.4 27 V21.2 H8.1 V17.2 H18 L19.3 15 L18 12.9 H8.1 Z" fill="#fff"/></g><text x="482" y="512.9" font-size="14" fill="#333">[6,7,8,9,10]</text><rect x="559.5" y="503.5" width="10" height="10" rx="3" fill="#d9d9d9" stroke="#999"/><rect x="664.5" y="473.5" width="139" height="29" rx="5" fill="#0090d4" stroke="#999"/><path d="M774 473.5 H798.5 A5 5 0 0 1 803.5 478.5 V497.5 A5 5 0 0 1 798.5 502.5 H774 Z" fill="#000" fill-opacity="0.05"/><path d="M774.5 474 V502" stroke="#000" stroke-opacity="0.1"/><g transform="translate(774 473)"><path d="M6.8 13.8 H9 V11.4 L11.2 14.6 L9 17.8 V15.6 H6.8 Z" fill="#fff"/><rect x="13" y="9.8" width="10" height="10.2" fill="#fff"/><rect x="14.6" y="11.3" width="7.1" height="6.8" fill="#0089ca"/><rect x="20.2" y="13.2" width="1.5" height="3" fill="#fff"/><path d="M14.6 13.2 H17.6 L18.5 14.7 L17.6 16.2 H14.6 Z" fill="#fff"/></g><text x="766" y="492.9" text-anchor="end" font-size="14" fill="#333">Write: A600</text><rect x="659.5" y="483.5" width="10" height="10" rx="3" fill="#d9d9d9" stroke="#999"/><rect x="799.5" y="483.5" width="10" height="10" rx="3" fill="#d9d9d9" stroke="#999"/><rect x="672.5" y="506" width="10.5" height="10.5" rx="2.5" fill="#5a8" stroke="#5a8" stroke-width="1"/><text x="688" y="515.5" font-size="12" fill="#888">done</text><rect x="1038.5" y="474.6" width="32" height="26.4" rx="5" fill="#eee" stroke="#b8b8b8" stroke-width="1.3"/><rect x="1049" y="479" width="16" height="18" rx="3.5" fill="#87a980" stroke="#999"/><rect x="904.5" y="473.5" width="139" height="29" rx="5" fill="#87a980" stroke="#999"/><path d="M1014 473.5 H1038.5 A5 5 0 0 1 1043.5 478.5 V497.5 A5 5 0 0 1 1038.5 502.5 H1014 Z" fill="#000" fill-opacity="0.05"/><path d="M1014.5 474 V502" stroke="#000" stroke-opacity="0.1"/><g transform="translate(1014 473)"><rect x="10" y="6" width="10" height="2" fill="#fff"/><rect x="10" y="10" width="10" height="2" fill="#fff"/><rect x="10" y="14" width="10" height="2" fill="#fff"/><rect x="10" y="18" width="10" height="2" fill="#fff"/><rect x="10" y="22" width="10" height="2" fill="#fff"/></g><text x="1006" y="492.9" text-anchor="end" font-size="14" fill="#333">msg.payload</text><rect x="899.5" y="483.5" width="10" height="10" rx="3" fill="#d9d9d9" stroke="#999"/><rect x="444.5" y="533.5" width="239" height="29" rx="5" fill="#fff" stroke="#999"/><path d="M449.5 533.5 H474 V562.5 H449.5 A5 5 0 0 1 444.5 557.5 V538.5 A5 5 0 0 1 449.5 533.5 Z" fill="#000" fill-opacity="0.05"/><path d="M473.5 534 V562" stroke="#000" stroke-opacity="0.1"/><g transform="translate(444 533)"><path d="M10.5 18.7 C7.2 17, 5.8 14.2, 6.8 12 C8 9.3, 11.3 8, 15 8 C19.8 8, 23.7 10.7, 23.7 14 C23.7 17.3, 19.8 20, 15 20 C14.4 20, 13.9 20, 13.4 19.8 L6.8 23.4 Z" fill="#fff" stroke="#c8c8c8" stroke-width="1"/></g><text x="482" y="552.9" font-style="italic" font-size="14" fill="#333">读取20个值【A600~A619】</text><rect x="418.5" y="574.6" width="32" height="26.4" rx="5" fill="#eee" stroke="#b8b8b8" stroke-width="1.3"/><rect x="424" y="579" width="16" height="18" rx="3.5" fill="#a6bbcf" stroke="#999"/><rect x="444.5" y="573.5" width="179" height="29" rx="5" fill="#a6bbcf" stroke="#999"/><path d="M449.5 573.5 H474 V602.5 H449.5 A5 5 0 0 1 444.5 597.5 V578.5 A5 5 0 0 1 449.5 573.5 Z" fill="#000" fill-opacity="0.05"/><path d="M473.5 574 V602" stroke="#000" stroke-opacity="0.1"/><g transform="translate(444 573)"><path d="M8.1 8.6 H14.4 V3 L20.7 15 L14.4 27 V21.2 H8.1 V17.2 H18 L19.3 15 L18 12.9 H8.1 Z" fill="#fff"/></g><text x="482" y="592.9" font-style="italic" font-size="14" fill="#333">读取【A600~A619】</text><rect x="619.5" y="583.5" width="10" height="10" rx="3" fill="#d9d9d9" stroke="#999"/><rect x="664.5" y="573.5" width="199" height="29" rx="5" fill="#0090d4" stroke="#999"/><path d="M669.5 573.5 H694 V602.5 H669.5 A5 5 0 0 1 664.5 597.5 V578.5 A5 5 0 0 1 669.5 573.5 Z" fill="#000" fill-opacity="0.05"/><path d="M693.5 574 V602" stroke="#000" stroke-opacity="0.1"/><g transform="translate(664 573)"><rect x="7" y="9.6" width="10" height="10.2" fill="#fff"/><rect x="8.3" y="11.1" width="7.1" height="6.8" fill="#0089ca"/><rect x="8.3" y="13" width="1.5" height="3" fill="#fff"/><path d="M15.4 13 H12.4 L11.5 14.5 L12.4 16 H15.4 Z" fill="#fff"/><path d="M18 13.8 H20.3 V11.6 L23.2 14.8 L20.3 17.9 V15.8 H18 Z" fill="#fff"/></g><text x="702" y="592.9" font-size="14" fill="#333">Read: 20 from A600</text><rect x="659.5" y="583.5" width="10" height="10" rx="3" fill="#d9d9d9" stroke="#999"/><rect x="859.5" y="583.5" width="10" height="10" rx="3" fill="#d9d9d9" stroke="#999"/><rect x="672.5" y="606" width="10.5" height="10.5" rx="2.5" fill="#5a8" stroke="#5a8" stroke-width="1"/><text x="688" y="615.5" font-size="12" fill="#888">done</text><rect x="1038.5" y="574.6" width="32" height="26.4" rx="5" fill="#eee" stroke="#b8b8b8" stroke-width="1.3"/><rect x="1049" y="579" width="16" height="18" rx="3.5" fill="#87a980" stroke="#999"/><rect x="904.5" y="573.5" width="139" height="29" rx="5" fill="#87a980" stroke="#999"/><path d="M1014 573.5 H1038.5 A5 5 0 0 1 1043.5 578.5 V597.5 A5 5 0 0 1 1038.5 602.5 H1014 Z" fill="#000" fill-opacity="0.05"/><path d="M1014.5 574 V602" stroke="#000" stroke-opacity="0.1"/><g transform="translate(1014 573)"><rect x="10" y="6" width="10" height="2" fill="#fff"/><rect x="10" y="10" width="10" height="2" fill="#fff"/><rect x="10" y="14" width="10" height="2" fill="#fff"/><rect x="10" y="18" width="10" height="2" fill="#fff"/><rect x="10" y="22" width="10" height="2" fill="#fff"/></g><text x="1006" y="592.9" text-anchor="end" font-size="14" fill="#333">msg.payload</text><rect x="899.5" y="583.5" width="10" height="10" rx="3" fill="#d9d9d9" stroke="#999"/><rect x="444.5" y="673.5" width="299" height="29" rx="5" fill="#fff" stroke="#999"/><path d="M449.5 673.5 H474 V702.5 H449.5 A5 5 0 0 1 444.5 697.5 V678.5 A5 5 0 0 1 449.5 673.5 Z" fill="#000" fill-opacity="0.05"/><path d="M473.5 674 V702" stroke="#000" stroke-opacity="0.1"/><g transform="translate(444 673)"><path d="M10.5 18.7 C7.2 17, 5.8 14.2, 6.8 12 C8 9.3, 11.3 8, 15 8 C19.8 8, 23.7 10.7, 23.7 14 C23.7 17.3, 19.8 20, 15 20 C14.4 20, 13.9 20, 13.4 19.8 L6.8 23.4 Z" fill="#fff" stroke="#c8c8c8" stroke-width="1"/></g><text x="482" y="692.9" font-style="italic" font-size="14" fill="#333">3、A区【BIT】，读写操作，bit有16位</text><rect x="444.5" y="713.5" width="239" height="29" rx="5" fill="#fff" stroke="#999"/><path d="M449.5 713.5 H474 V742.5 H449.5 A5 5 0 0 1 444.5 737.5 V718.5 A5 5 0 0 1 449.5 713.5 Z" fill="#000" fill-opacity="0.05"/><path d="M473.5 714 V742" stroke="#000" stroke-opacity="0.1"/><g transform="translate(444 713)"><path d="M10.5 18.7 C7.2 17, 5.8 14.2, 6.8 12 C8 9.3, 11.3 8, 15 8 C19.8 8, 23.7 10.7, 23.7 14 C23.7 17.3, 19.8 20, 15 20 C14.4 20, 13.9 20, 13.4 19.8 L6.8 23.4 Z" fill="#fff" stroke="#c8c8c8" stroke-width="1"/></g><text x="482" y="732.9" font-style="italic" font-size="14" fill="#333">写入4个值【A600.0~A600.3】</text><rect x="418.5" y="754.6" width="32" height="26.4" rx="5" fill="#eee" stroke="#b8b8b8" stroke-width="1.3"/><rect x="424" y="759" width="16" height="18" rx="3.5" fill="#a6bbcf" stroke="#999"/><rect x="444.5" y="753.5" width="199" height="29" rx="5" fill="#a6bbcf" stroke="#999"/><path d="M449.5 753.5 H474 V782.5 H449.5 A5 5 0 0 1 444.5 777.5 V758.5 A5 5 0 0 1 449.5 753.5 Z" fill="#000" fill-opacity="0.05"/><path d="M473.5 754 V782" stroke="#000" stroke-opacity="0.1"/><g transform="translate(444 753)"><path d="M8.1 8.6 H14.4 V3 L20.7 15 L14.4 27 V21.2 H8.1 V17.2 H18 L19.3 15 L18 12.9 H8.1 Z" fill="#fff"/></g><text x="482" y="772.9" font-style="italic" font-size="14" fill="#333">[true,false, true,false]</text><rect x="639.5" y="763.5" width="10" height="10" rx="3" fill="#d9d9d9" stroke="#999"/><rect x="418.5" y="794.6" width="32" height="26.4" rx="5" fill="#eee" stroke="#b8b8b8" stroke-width="1.3"/><rect x="424" y="799" width="16" height="18" rx="3.5" fill="#a6bbcf" stroke="#999"/><rect x="444.5" y="793.5" width="119" height="29" rx="5" fill="#a6bbcf" stroke="#999"/><path d="M449.5 793.5 H474 V822.5 H449.5 A5 5 0 0 1 444.5 817.5 V798.5 A5 5 0 0 1 449.5 793.5 Z" fill="#000" fill-opacity="0.05"/><path d="M473.5 794 V822" stroke="#000" stroke-opacity="0.1"/><g transform="translate(444 793)"><path d="M8.1 8.6 H14.4 V3 L20.7 15 L14.4 27 V21.2 H8.1 V17.2 H18 L19.3 15 L18 12.9 H8.1 Z" fill="#fff"/></g><text x="482" y="812.9" font-style="italic" font-size="14" fill="#333">[0,0,1,1]</text><rect x="559.5" y="803.5" width="10" height="10" rx="3" fill="#d9d9d9" stroke="#999"/><rect x="684.5" y="773.5" width="159" height="29" rx="5" fill="#0090d4" stroke="#999"/><path d="M814 773.5 H838.5 A5 5 0 0 1 843.5 778.5 V797.5 A5 5 0 0 1 838.5 802.5 H814 Z" fill="#000" fill-opacity="0.05"/><path d="M814.5 774 V802" stroke="#000" stroke-opacity="0.1"/><g transform="translate(814 773)"><path d="M6.8 13.8 H9 V11.4 L11.2 14.6 L9 17.8 V15.6 H6.8 Z" fill="#fff"/><rect x="13" y="9.8" width="10" height="10.2" fill="#fff"/><rect x="14.6" y="11.3" width="7.1" height="6.8" fill="#0089ca"/><rect x="20.2" y="13.2" width="1.5" height="3" fill="#fff"/><path d="M14.6 13.2 H17.6 L18.5 14.7 L17.6 16.2 H14.6 Z" fill="#fff"/></g><text x="806" y="792.9" text-anchor="end" font-size="14" fill="#333">Write: A600.00</text><rect x="679.5" y="783.5" width="10" height="10" rx="3" fill="#d9d9d9" stroke="#999"/><rect x="839.5" y="783.5" width="10" height="10" rx="3" fill="#d9d9d9" stroke="#999"/><rect x="692.5" y="806" width="10.5" height="10.5" rx="2.5" fill="#5a8" stroke="#5a8" stroke-width="1"/><text x="708" y="815.5" font-size="12" fill="#888">connected</text><rect x="1058.5" y="774.6" width="32" height="26.4" rx="5" fill="#eee" stroke="#b8b8b8" stroke-width="1.3"/><rect x="1069" y="779" width="16" height="18" rx="3.5" fill="#87a980" stroke="#999"/><rect x="924.5" y="773.5" width="139" height="29" rx="5" fill="#87a980" stroke="#999"/><path d="M1034 773.5 H1058.5 A5 5 0 0 1 1063.5 778.5 V797.5 A5 5 0 0 1 1058.5 802.5 H1034 Z" fill="#000" fill-opacity="0.05"/><path d="M1034.5 774 V802" stroke="#000" stroke-opacity="0.1"/><g transform="translate(1034 773)"><rect x="10" y="6" width="10" height="2" fill="#fff"/><rect x="10" y="10" width="10" height="2" fill="#fff"/><rect x="10" y="14" width="10" height="2" fill="#fff"/><rect x="10" y="18" width="10" height="2" fill="#fff"/><rect x="10" y="22" width="10" height="2" fill="#fff"/></g><text x="1026" y="792.9" text-anchor="end" font-size="14" fill="#333">msg.payload</text><rect x="919.5" y="783.5" width="10" height="10" rx="3" fill="#d9d9d9" stroke="#999"/><rect x="444.5" y="833.5" width="399" height="29" rx="5" fill="#fff" stroke="#999"/><path d="M449.5 833.5 H474 V862.5 H449.5 A5 5 0 0 1 444.5 857.5 V838.5 A5 5 0 0 1 449.5 833.5 Z" fill="#000" fill-opacity="0.05"/><path d="M473.5 834 V862" stroke="#000" stroke-opacity="0.1"/><g transform="translate(444 833)"><path d="M10.5 18.7 C7.2 17, 5.8 14.2, 6.8 12 C8 9.3, 11.3 8, 15 8 C19.8 8, 23.7 10.7, 23.7 14 C23.7 17.3, 19.8 20, 15 20 C14.4 20, 13.9 20, 13.4 19.8 L6.8 23.4 Z" fill="#fff" stroke="#c8c8c8" stroke-width="1"/></g><text x="482" y="852.9" font-style="italic" font-size="14" fill="#333">读取32个值【A600.0~A600.15】【A601.0~A601.15】</text><rect x="418.5" y="874.6" width="32" height="26.4" rx="5" fill="#eee" stroke="#b8b8b8" stroke-width="1.3"/><rect x="424" y="879" width="16" height="18" rx="3.5" fill="#a6bbcf" stroke="#999"/><rect x="444.5" y="873.5" width="219" height="29" rx="5" fill="#a6bbcf" stroke="#999"/><path d="M449.5 873.5 H474 V902.5 H449.5 A5 5 0 0 1 444.5 897.5 V878.5 A5 5 0 0 1 449.5 873.5 Z" fill="#000" fill-opacity="0.05"/><path d="M473.5 874 V902" stroke="#000" stroke-opacity="0.1"/><g transform="translate(444 873)"><path d="M8.1 8.6 H14.4 V3 L20.7 15 L14.4 27 V21.2 H8.1 V17.2 H18 L19.3 15 L18 12.9 H8.1 Z" fill="#fff"/></g><text x="482" y="892.9" font-style="italic" font-size="14" fill="#333">读取【A600.0~A601.15】</text><rect x="659.5" y="883.5" width="10" height="10" rx="3" fill="#d9d9d9" stroke="#999"/><rect x="684.5" y="873.5" width="219" height="29" rx="5" fill="#0090d4" stroke="#999"/><path d="M689.5 873.5 H714 V902.5 H689.5 A5 5 0 0 1 684.5 897.5 V878.5 A5 5 0 0 1 689.5 873.5 Z" fill="#000" fill-opacity="0.05"/><path d="M713.5 874 V902" stroke="#000" stroke-opacity="0.1"/><g transform="translate(684 873)"><rect x="7" y="9.6" width="10" height="10.2" fill="#fff"/><rect x="8.3" y="11.1" width="7.1" height="6.8" fill="#0089ca"/><rect x="8.3" y="13" width="1.5" height="3" fill="#fff"/><path d="M15.4 13 H12.4 L11.5 14.5 L12.4 16 H15.4 Z" fill="#fff"/><path d="M18 13.8 H20.3 V11.6 L23.2 14.8 L20.3 17.9 V15.8 H18 Z" fill="#fff"/></g><text x="722" y="892.9" font-size="14" fill="#333">Read: 32 from A600.00</text><rect x="679.5" y="883.5" width="10" height="10" rx="3" fill="#d9d9d9" stroke="#999"/><rect x="899.5" y="883.5" width="10" height="10" rx="3" fill="#d9d9d9" stroke="#999"/><rect x="692.5" y="906" width="10.5" height="10.5" rx="2.5" fill="#5a8" stroke="#5a8" stroke-width="1"/><text x="708" y="915.5" font-size="12" fill="#888">connected</text><rect x="1058.5" y="874.6" width="32" height="26.4" rx="5" fill="#eee" stroke="#b8b8b8" stroke-width="1.3"/><rect x="1069" y="879" width="16" height="18" rx="3.5" fill="#87a980" stroke="#999"/><rect x="924.5" y="873.5" width="139" height="29" rx="5" fill="#87a980" stroke="#999"/><path d="M1034 873.5 H1058.5 A5 5 0 0 1 1063.5 878.5 V897.5 A5 5 0 0 1 1058.5 902.5 H1034 Z" fill="#000" fill-opacity="0.05"/><path d="M1034.5 874 V902" stroke="#000" stroke-opacity="0.1"/><g transform="translate(1034 873)"><rect x="10" y="6" width="10" height="2" fill="#fff"/><rect x="10" y="10" width="10" height="2" fill="#fff"/><rect x="10" y="14" width="10" height="2" fill="#fff"/><rect x="10" y="18" width="10" height="2" fill="#fff"/><rect x="10" y="22" width="10" height="2" fill="#fff"/></g><text x="1026" y="892.9" text-anchor="end" font-size="14" fill="#333">msg.payload</text><rect x="919.5" y="883.5" width="10" height="10" rx="3" fill="#d9d9d9" stroke="#999"/><circle cx="1036" cy="470" r="5" fill="#00bcff" stroke="#1a8fd0" stroke-width="0.8"/><rect x="437" y="222" width="66.5" height="45.5" rx="2" fill="none" stroke="#ff1717" stroke-width="3"/><rect x="414.2" y="444.3" width="57.5" height="43" rx="2" fill="none" stroke="#ff1717" stroke-width="3"/><rect x="408.2" y="561.4" width="56.5" height="53.8" rx="2" fill="none" stroke="#ff1717" stroke-width="3"/><text x="415" y="238" font-size="22.5" fill="#ff1717">1</text><text x="416" y="432" font-size="22.5" fill="#ff1717">2</text><text x="413.5" y="559" font-size="22.5" fill="#ff1717">3</text></svg>
<div class="a" style="left:1203px;top:108px;width:14px;height:854px;background:#fafafa"></div>
<div class="a" style="left:404px;top:947px;width:799px;height:15px;background:#fafafa"></div>
<svg class="a" style="left:1205px;top:112px" width="11" height="9" viewBox="0 0 11 9"><path d="M1 8 L5.5 1 L10 8 Z" fill="#888" stroke="#888" stroke-linejoin="round"/></svg>
<div class="a" style="left:1206px;top:126px;width:9px;height:84px;background:#8c8c8c;border-radius:4.5px"></div>
<svg class="a" style="left:1205px;top:935px" width="11" height="9" viewBox="0 0 11 9"><path d="M1 1 L5.5 8 L10 1 Z" fill="#888" stroke="#888" stroke-linejoin="round"/></svg>
<svg class="a" style="left:407px;top:949px" width="9" height="11" viewBox="0 0 9 11"><path d="M8 1 L1 5.5 L8 10 Z" fill="#888" stroke="#888" stroke-linejoin="round"/></svg>
<div class="a" style="left:422px;top:950px;width:76px;height:9px;background:#8c8c8c;border-radius:4.5px"></div>
<svg class="a" style="left:1190px;top:949px" width="9" height="11" viewBox="0 0 9 11"><path d="M1 1 L8 5.5 L1 10 Z" fill="#888" stroke="#888" stroke-linejoin="round"/></svg>
<div class="a" style="left:404px;top:962px;width:815px;height:27px;background:#f3f3f3;border-top:1px solid #bbb;border-bottom:1px solid #bbb"></div>
<div class="a" style="left:414px;top:966px;width:19px;height:19px;background:#fff;border:1px solid #ccc"></div>
<svg class="a" style="left:417px;top:969px" width="13" height="13" viewBox="0 0 13 13"><circle cx="5.5" cy="5.5" r="3.6" fill="none" stroke="#666" stroke-width="1.5"/><path d="M8.2 8.2 L11 11" stroke="#666" stroke-width="1.7"/></svg>
<div class="a" style="left:1128px;top:966px;width:19px;height:19px;background:#fff;border:1px solid #ccc"></div>
<svg class="a" style="left:1130px;top:969px" width="15" height="13" viewBox="0 0 15 13"><path d="M1.5 2.5 L5 1.5 L9.5 2.5 L13.5 1.5 V11 L9.5 12 L5 11 L1.5 12 Z M5 1.5 V11 M9.5 2.5 V12" fill="none" stroke="#777" stroke-width="1"/></svg>
<div class="a" style="left:1151px;top:966px;width:57px;height:19px;background:#fff;border:1px solid #ccc"></div>
<div class="a" style="left:1169px;top:966px;width:1px;height:19px;background:#ccc"></div>
<div class="a" style="left:1188px;top:966px;width:1px;height:19px;background:#ccc"></div>
<svg class="a" style="left:1151px;top:966px" width="57" height="19" viewBox="0 0 57 19"><rect x="4" y="8.3" width="10" height="2.4" fill="#777"/><circle cx="28.5" cy="9.5" r="4.5" fill="none" stroke="#777" stroke-width="1.5"/><rect x="42" y="8.3" width="10" height="2.4" fill="#777"/><rect x="45.8" y="4.5" width="2.4" height="10" fill="#777"/></svg>
<div class="a" style="left:1217px;top:72px;width:7px;height:917px;background:#f3f3f3"></div>
<div class="a" style="left:1218px;top:979px;width:1px;height:10px;background:#bbb"></div>
<div class="a" style="left:1218px;top:72px;width:1px;height:5px;background:#bbb"></div>
<div class="a" style="left:1219px;top:503px;width:3px;height:50px;background:#999"></div>
<div class="a" style="left:1224px;top:72px;width:455px;height:917px;background:#fff;border:1px solid #bbb;border-top:none"></div>
<div class="a" style="left:1225px;top:107px;width:453px;height:1px;background:#bbb"></div>
<div class="a" style="left:1228px;top:76px;width:200px;height:32px;background:#fff;border:1px solid #bbb;border-bottom:none"></div>
<svg class="a" style="left:1241px;top:84px" width="13" height="13" viewBox="0 0 13 13" fill="#777"><path d="M3.9 2.7 A2.6 2.3 0 0 1 9.1 2.7 Z"/><rect x="2.8" y="3.3" width="7.4" height="8.8" rx="2"/><path d="M0.9 2.4 L2.9 4.4 M12.1 2.4 L10.1 4.4 M0 7.4 H2.9 M13 7.4 H10.1 M0.9 12.4 L2.9 10.4 M12.1 12.4 L10.1 10.4" stroke="#777" stroke-width="1.2"/><rect x="6.1" y="3.6" width="0.8" height="8.2" fill="#fff"/></svg>
<div class="a" style="left:1259px;top:80px;font-size:13px;line-height:22px;color:#333;font-weight:bold">调试窗口</div>
<div class="a" style="left:1477px;top:77px;width:28px;height:28px;background:#fff;border:1px solid #ccc"></div>
<div class="a" style="left:1511px;top:77px;width:28px;height:28px;background:#fff;border:1px solid #ccc"></div>
<div class="a" style="left:1545px;top:77px;width:28px;height:28px;background:#eee;border:1px solid #ccc"></div>
<div class="a" style="left:1579px;top:77px;width:28px;height:28px;background:#fff;border:1px solid #ccc"></div>
<div class="a" style="left:1613px;top:77px;width:28px;height:28px;background:#fff;border:1px solid #ccc"></div>
<div class="a" style="left:1545px;top:103px;width:28px;height:2px;background:#999"></div>
<svg class="a" style="left:1477px;top:77px" width="28" height="28" viewBox="0 0 28 28" fill="#555"><circle cx="14" cy="9" r="1.8"/><path d="M11.5 12 H15.3 V18.5 H16.5 V20 H11.5 V18.5 H12.7 V13.5 H11.5 Z"/></svg>
<svg class="a" style="left:1511px;top:77px" width="28" height="28" viewBox="0 0 28 28"><path d="M10.5 9 H19 L16.8 18 H8.5 Z" fill="#555"/><path d="M8.5 18.2 L8.2 19.5 H16.5 L18.8 10" fill="none" stroke="#555" stroke-width="1.2"/><path d="M11.5 11.5 H16.5" stroke="#fff" stroke-width="0.8"/></svg>
<svg class="a" style="left:1553px;top:84px" width="13" height="13" viewBox="0 0 13 13" fill="#777"><path d="M3.9 2.7 A2.6 2.3 0 0 1 9.1 2.7 Z"/><rect x="2.8" y="3.3" width="7.4" height="8.8" rx="2"/><path d="M0.9 2.4 L2.9 4.4 M12.1 2.4 L10.1 4.4 M0 7.4 H2.9 M13 7.4 H10.1 M0.9 12.4 L2.9 10.4 M12.1 12.4 L10.1 10.4" stroke="#777" stroke-width="1.2"/><rect x="6.1" y="3.6" width="0.8" height="8.2" fill="#eee"/></svg>
<svg class="a" style="left:1579px;top:77px" width="28" height="28" viewBox="0 0 28 28"><g transform="translate(14 14)"><rect x="-1.6" y="-6.8" width="3.2" height="3.5" rx="0.6" fill="#555" transform="rotate(0)"/><rect x="-1.6" y="-6.8" width="3.2" height="3.5" rx="0.6" fill="#555" transform="rotate(45)"/><rect x="-1.6" y="-6.8" width="3.2" height="3.5" rx="0.6" fill="#555" transform="rotate(90)"/><rect x="-1.6" y="-6.8" width="3.2" height="3.5" rx="0.6" fill="#555" transform="rotate(135)"/><rect x="-1.6" y="-6.8" width="3.2" height="3.5" rx="0.6" fill="#555" transform="rotate(180)"/><rect x="-1.6" y="-6.8" width="3.2" height="3.5" rx="0.6" fill="#555" transform="rotate(225)"/><rect x="-1.6" y="-6.8" width="3.2" height="3.5" rx="0.6" fill="#555" transform="rotate(270)"/><rect x="-1.6" y="-6.8" width="3.2" height="3.5" rx="0.6" fill="#555" transform="rotate(315)"/><circle r="3.8" fill="none" stroke="#555" stroke-width="2.6"/></g></svg>
<svg class="a" style="left:1613px;top:77px" width="28" height="28" viewBox="0 0 28 28" fill="#555">
<ellipse cx="14" cy="8.8" rx="5.8" ry="2"/><path d="M8.2 10.2 C8.2 12.6, 19.8 12.6, 19.8 10.2 V12.4 C19.8 14.8, 8.2 14.8, 8.2 12.4 Z"/>
<path d="M8.2 14 C8.2 16.4, 19.8 16.4, 19.8 14 V16.2 C19.8 18.6, 8.2 18.6, 8.2 16.2 Z"/><path d="M8.2 17.8 C8.2 20.2, 19.8 20.2, 19.8 17.8 V19.6 C19.8 22, 8.2 22, 8.2 19.6 Z"/></svg>
<svg class="a" style="left:1656px;top:89px" width="10" height="5" viewBox="0 0 10 5"><path d="M0 0 H9 L4.5 4.5 Z" fill="#888"/></svg>
<div class="a" style="left:1225px;top:108px;width:453px;height:42px;background:#f3f3f3;border-bottom:1px solid #ddd"></div>
<div class="a" style="left:1478px;top:116px;width:97px;height:25px;background:#fff;border:1px solid #ccc"></div>
<svg class="a" style="left:1486px;top:123px" width="11" height="11" viewBox="0 0 11 11"><path d="M0.5 0.5 H10.5 L6.8 5 V10.5 L4.2 8.5 V5 Z" fill="#888"/></svg>
<div class="a" style="left:1500px;top:117px;font-size:13px;line-height:23px;color:#777">当前流程</div>
<svg class="a" style="left:1561px;top:126px" width="9" height="5" viewBox="0 0 9 5"><path d="M0 0 H8 L4 4.5 Z" fill="#888"/></svg>
<div class="a" style="left:1585px;top:116px;width:73px;height:25px;background:#fff;border:1px solid #ccc"></div>
<svg class="a" style="left:1593px;top:122px" width="10" height="12" viewBox="0 0 10 12"><rect x="0.5" y="1.5" width="9" height="1.5" fill="#888"/><rect x="3.5" y="0" width="3" height="2" fill="#888"/><path d="M1.2 3.5 H8.8 L8.2 11.5 H1.8 Z" fill="#888"/><path d="M3.7 5 V10 M6.3 5 V10" stroke="#fff" stroke-width="0.6"/></svg>
<div class="a" style="left:1607px;top:117px;font-size:13px;line-height:23px;color:#777">所有</div>
<svg class="a" style="left:1643px;top:126px" width="9" height="5" viewBox="0 0 9 5"><path d="M0 0 H8 L4 4.5 Z" fill="#888"/></svg>
<div class="a" style="left:1225px;top:150px;width:445px;height:531px;background:#fff;border-left:8px solid #eee;border-bottom:1px solid #eee"></div>
<div class="a" style="left:1670px;top:150px;width:8px;height:531px;background:#f3f3f3"></div>
<div class="a" style="left:1235px;top:155px;font-size:11px;line-height:16px;color:#555;white-space:pre">2025/3/27 11:35:32   节点: ac7c20d32685d5e4</div>
<div class="a" style="left:1235px;top:175px;font-size:11px;line-height:16px;color:#a55;white-space:pre">msg.payload : Object</div>
<svg class="a" style="left:1241px;top:205px" width="10" height="7" viewBox="0 0 10 7"><path d="M0.5 0.5 H9 L4.75 5.5 Z" fill="#888"/></svg>
<div class="dbg" style="left:1252px;top:200px;color:#666;font-style:italic">object</div>
<div class="dbg" style="top:223.40px"><span class="dk">A600</span>: <span class="dv">1</span></div>
<div class="dbg" style="top:246.30px"><span class="dk">A601</span>: <span class="dv">2</span></div>
<div class="dbg" style="top:269.20px"><span class="dk">A602</span>: <span class="dv">3</span></div>
<div class="dbg" style="top:292.10px"><span class="dk">A603</span>: <span class="dv">4</span></div>
<div class="dbg" style="top:315.00px"><span class="dk">A604</span>: <span class="dv">55</span></div>
<div class="dbg" style="top:337.90px"><span class="dk">A605</span>: <span class="dv">0</span></div>
<div class="dbg" style="top:360.80px"><span class="dk">A606</span>: <span class="dv">0</span></div>
<div class="dbg" style="top:383.70px"><span class="dk">A607</span>: <span class="dv">0</span></div>
<div class="dbg" style="top:406.60px"><span class="dk">A608</span>: <span class="dv">0</span></div>
<div class="dbg" style="top:429.50px"><span class="dk">A609</span>: <span class="dv">0</span></div>
<div class="dbg" style="top:452.40px"><span class="dk">A610</span>: <span class="dv">0</span></div>
<div class="dbg" style="top:475.30px"><span class="dk">A611</span>: <span class="dv">0</span></div>
<div class="dbg" style="top:498.20px"><span class="dk">A612</span>: <span class="dv">0</span></div>
<div class="dbg" style="top:521.10px"><span class="dk">A613</span>: <span class="dv">0</span></div>
<div class="dbg" style="top:544.00px"><span class="dk">A614</span>: <span class="dv">0</span></div>
<div class="dbg" style="top:566.90px"><span class="dk">A615</span>: <span class="dv">0</span></div>
<div class="dbg" style="top:589.80px"><span class="dk">A616</span>: <span class="dv">0</span></div>
<div class="dbg" style="top:612.70px"><span class="dk">A617</span>: <span class="dv">0</span></div>
<div class="dbg" style="top:635.60px"><span class="dk">A618</span>: <span class="dv">0</span></div>
<div class="dbg" style="top:658.50px"><span class="dk">A619</span>: <span class="dv">0</span></div>
<div class="a" style="left:1225px;top:962px;width:453px;height:26px;background:#f3f3f3;border-top:1px solid #bbb"></div>
<div class="a" style="left:1653px;top:966px;width:19px;height:19px;background:#fff;border:1px solid #ccc"></div>
<svg class="a" style="left:1656px;top:969px" width="13" height="13" viewBox="0 0 13 13"><rect x="1" y="1.5" width="11" height="7.5" fill="#666"/><rect x="2.2" y="2.7" width="8.6" height="5.1" fill="#fff"/><rect x="5.5" y="9" width="2" height="2" fill="#666"/><rect x="3" y="11" width="7" height="1.3" fill="#666"/></svg>
<div class="a" style="left:224px;top:72px;width:1455px;height:1px;background:#c6c6c6"></div>
<svg class="a" style="left:188px;top:84px" width="24" height="24" viewBox="0 0 24 24"><circle cx="12" cy="12" r="12" fill="#7b45d8"/>
<rect x="5.5" y="5.5" width="13.5" height="1.6" fill="#fff"/><rect x="10.5" y="9.3" width="8.5" height="1.6" fill="#fff"/><rect x="10.5" y="13.1" width="8.5" height="1.6" fill="#fff"/><rect x="5.5" y="16.9" width="13.5" height="1.6" fill="#fff"/>
<path d="M9 9 L5.5 12 L9 15 Z" fill="#fff"/></svg>
<svg class="a" style="left:0;top:1003px" width="10" height="10" viewBox="0 0 10 10"><path d="M0 10 V2 A8 8 0 0 0 8 10 Z" fill="#555" fill-opacity="0.8"/></svg>
<svg class="a" style="left:1695px;top:1005px" width="8" height="8" viewBox="0 0 8 8"><path d="M8 0 A8 8 0 0 1 0 8 H8 Z" fill="#888" fill-opacity="0.7"/></svg>
</body></html>
